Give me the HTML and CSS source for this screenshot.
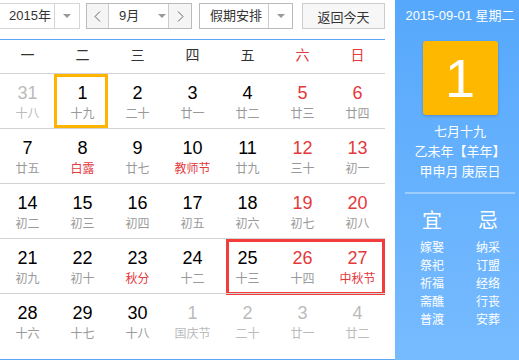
FILE: index.html
```html
<!DOCTYPE html>
<html lang="zh-CN">
<head>
    <meta charset="UTF-8">
    <title>万年历</title>
    <link rel="stylesheet" href="styles.css">
</head>
<body>
<div class="page">
    <div class="main">
        <div class="toolbar">
            <div class="sel sel-year">
                <span class="sel-text">2015年</span>
                <span class="sel-arrow"><i class="tri"></i></span>
            </div>
            <div class="sel month-group">
                <span class="nav prev"><svg width="7" height="11" viewBox="0 0 7 11"><polyline points="6,0.5 1,5.5 6,10.5" fill="none" stroke="#666" stroke-width="1"/></svg></span>
                <span class="month">9月<i class="tri"></i></span>
                <span class="nav next"><svg width="7" height="11" viewBox="0 0 7 11"><polyline points="1,0.5 6,5.5 1,10.5" fill="none" stroke="#666" stroke-width="1"/></svg></span>
            </div>
            <div class="sel sel-holiday">
                <span class="sel-text">假期安排</span>
                <span class="sel-arrow"><i class="tri"></i></span>
            </div>
            <button class="today-btn">返回今天</button>
        </div>
        <div class="cal">
            <div class="weekdays">
                <span>一</span><span>二</span><span>三</span><span>四</span><span>五</span><span class="red">六</span><span class="red">日</span>
            </div>
            <div class="week">
                <div class="day other"><b>31</b><em>十八</em></div>
                <div class="day today"><b>1</b><em>十九</em></div>
                <div class="day"><b>2</b><em>二十</em></div>
                <div class="day"><b>3</b><em>廿一</em></div>
                <div class="day"><b>4</b><em>廿二</em></div>
                <div class="day weekend"><b>5</b><em>廿三</em></div>
                <div class="day weekend"><b>6</b><em>廿四</em></div>
            </div>
            <div class="week">
                <div class="day"><b>7</b><em>廿五</em></div>
                <div class="day"><b>8</b><em class="fest">白露</em></div>
                <div class="day"><b>9</b><em>廿七</em></div>
                <div class="day"><b>10</b><em class="fest">教师节</em></div>
                <div class="day"><b>11</b><em>廿九</em></div>
                <div class="day weekend"><b>12</b><em>三十</em></div>
                <div class="day weekend"><b>13</b><em>初一</em></div>
            </div>
            <div class="week">
                <div class="day"><b>14</b><em>初二</em></div>
                <div class="day"><b>15</b><em>初三</em></div>
                <div class="day"><b>16</b><em>初四</em></div>
                <div class="day"><b>17</b><em>初五</em></div>
                <div class="day"><b>18</b><em>初六</em></div>
                <div class="day weekend"><b>19</b><em>初七</em></div>
                <div class="day weekend"><b>20</b><em>初八</em></div>
            </div>
            <div class="week">
                <div class="day"><b>21</b><em>初九</em></div>
                <div class="day"><b>22</b><em>初十</em></div>
                <div class="day"><b>23</b><em class="fest">秋分</em></div>
                <div class="day"><b>24</b><em>十二</em></div>
                <div class="day"><b>25</b><em>十三</em></div>
                <div class="day weekend"><b>26</b><em>十四</em></div>
                <div class="day weekend"><b>27</b><em class="fest">中秋节</em></div>
                <div class="range-box"></div>
            </div>
            <div class="week">
                <div class="day"><b>28</b><em>十六</em></div>
                <div class="day"><b>29</b><em>十七</em></div>
                <div class="day"><b>30</b><em>十八</em></div>
                <div class="day other"><b>1</b><em>国庆节</em></div>
                <div class="day other"><b>2</b><em>二十</em></div>
                <div class="day other"><b>3</b><em>廿一</em></div>
                <div class="day other"><b>4</b><em>廿二</em></div>
            </div>
        </div>
    </div>
    <div class="side">
        <div class="side-date">2015-09-01 星期二</div>
        <div class="big-day">1</div>
        <div class="lunar">
            <p>七月十九</p>
            <p>乙未年【羊年】</p>
            <p>甲申月 庚辰日</p>
        </div>
        <div class="side-line"></div>
        <div class="yiji">
            <div class="yiji-col">
                <h3>宜</h3>
                <p>嫁娶</p><p>祭祀</p><p>祈福</p><p>斋醮</p><p>普渡</p>
            </div>
            <div class="yiji-col">
                <h3>忌</h3>
                <p>纳采</p><p>订盟</p><p>经络</p><p>行丧</p><p>安葬</p>
            </div>
        </div>
    </div>
</div>
</body>
</html>
```

FILE: styles.css
```css
body,p,h3{
    margin: 0;
    padding: 0;
}
body{
    font-family: "Liberation Sans", "Noto Sans CJK SC", sans-serif;
    color: #333;
    overflow: hidden;
}
.page{
    display: flex;
    width: 519px;
    height: 360px;
    overflow: hidden;
}
.main{
    width: 395px;
    height: 360px;
    box-sizing: border-box;
    border-bottom: 1px solid #5ea8f6;
    flex-shrink: 0;
}

/* 顶部工具条 */
.toolbar{
    display: flex;
    align-items: flex-start;
    width: 385px;
    height: 36px;
    padding-top: 3px;
    border-bottom: 1px solid #5ea8f6;
    font-size: 13px;
}
.sel{
    display: flex;
    height: 26px;
    box-sizing: border-box;
    border: 1px solid #bbb;
    line-height: 24px;
    background: #fff;
}
.sel-text{
    box-sizing: border-box;
    border-right: 1px solid #ccc;
}
.sel-arrow{
    display: flex;
    align-items: center;
    justify-content: center;
}
.tri{
    display: inline-block;
    width: 0;
    height: 0;
    border-left: 4px solid transparent;
    border-right: 4px solid transparent;
    border-top: 4px solid #999;
}
.sel-year{
    border-color: #d6d6d6;
    border-left: 0;
}
.sel-year .sel-text{
    width: 55px;
    padding-left: 9px;
    border-right-color: #d6d6d6;
}
.sel-year .sel-arrow{
    width: 24px;
}
.month-group{
    margin-left: 6px;
}
.nav{
    display: flex;
    align-items: center;
    justify-content: center;
    background: #f5f5f5;
}
.prev{
    width: 22px;
    border-right: 1px solid #ccc;
    box-sizing: border-box;
}
.next{
    width: 22px;
    border-left: 1px solid #ccc;
}
.month{
    display: flex;
    align-items: center;
    width: 59px;
    padding-left: 10px;
    box-sizing: border-box;
}
.month .tri{
    margin-left: 19px;
}
.sel-holiday{
    margin-left: 7px;
}
.sel-holiday .sel-text{
    width: 69px;
    padding-left: 10px;
}
.sel-holiday .sel-arrow{
    width: 23px;
}
.today-btn{
    margin-left: 9px;
    width: 83px;
    height: 26px;
    padding: 0;
    border: 1px solid #ccc;
    background: #f7f7f7;
    font-family: "Liberation Sans", "Noto Sans CJK SC", sans-serif;
    font-size: 13px;
    color: #333;
}

/* 日历格子 */
.cal{
    width: 385px;
}
.weekdays{
    display: flex;
    height: 33px;
    line-height: 31px;
    font-size: 14px;
    color: #333;
}
.weekdays span{
    width: 55px;
    text-align: center;
}
.red{
    color: #e4393c;
}
.week{
    position: relative;
    display: flex;
    border-top: 1px solid #d3d3d3;
}
.day{
    position: relative;
    width: 55px;
    height: 54px;
    padding-top: 8px;
    box-sizing: border-box;
    text-align: center;
}
.day b{
    display: block;
    font-weight: normal;
    font-size: 18px;
    line-height: 22px;
    color: #000;
}
.day em{
    display: block;
    font-style: normal;
    font-size: 12px;
    line-height: 18px;
    color: #999;
    font-family: "Noto Sans CJK SC", sans-serif;
}
.day.weekend b{
    color: #e4393c;
}
.day em.fest{
    color: #e4393c;
}
.day.other b,
.day.other em{
    color: #bbb;
}
.today::after{
    content: "";
    position: absolute;
    top: 0;
    left: -1px;
    width: 54px;
    height: 54px;
    box-sizing: border-box;
    border: 3px solid #ffb400;
}
.range-box{
    position: absolute;
    top: 0;
    left: 226px;
    width: 159px;
    height: 56px;
    box-sizing: border-box;
    border: 3px solid #f33c3c;
}

/* 右侧蓝色面板 */
.side{
    width: 130px;
    height: 360px;
    flex-shrink: 0;
    background: linear-gradient(#56a8fc, #77bbff);
    color: #fff;
    text-align: center;
    font-family: "Liberation Sans", "Noto Sans CJK SC", sans-serif;
}
.side-date{
    height: 32px;
    line-height: 32px;
    font-size: 13px;
}
.big-day{
    width: 75px;
    height: 74px;
    margin: 9px auto 0;
    border-radius: 3px;
    background: #ffb800;
    box-shadow: 0 1px 3px rgba(0,0,0,.2);
    font-size: 54px;
    line-height: 74px;
}
.lunar{
    margin-top: 6px;
    font-size: 13px;
    line-height: 20px;
    font-family: "Noto Sans CJK SC", sans-serif;
}
.side-line{
    width: 110px;
    height: 2px;
    margin: 11px auto 0;
    background: #9dcdff;
}
.yiji{
    display: flex;
    justify-content: center;
    gap: 30px;
    margin-top: 13px;
    font-family: "Noto Sans CJK SC", sans-serif;
}
.yiji-col{
    width: 26px;
}
.yiji h3{
    font-weight: normal;
    font-size: 20px;
    line-height: 26px;
    margin-bottom: 5px;
}
.yiji p{
    font-size: 12px;
    line-height: 18px;
}
```
